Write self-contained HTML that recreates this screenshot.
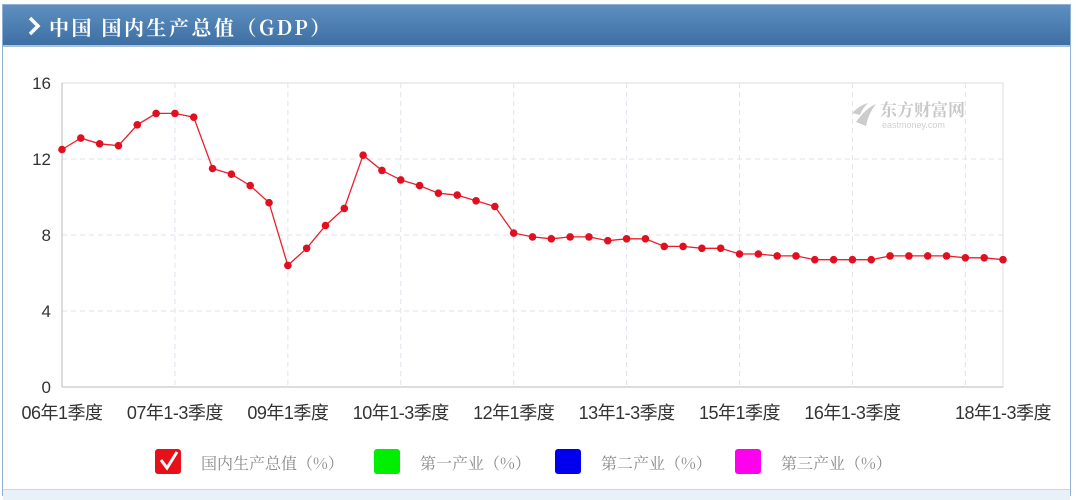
<!DOCTYPE html>
<html><head><meta charset="utf-8"><style>
body{margin:0;width:1080px;height:495px;background:#fff;overflow:hidden;font-family:"Liberation Sans","Noto Sans CJK SC",sans-serif}
.frame{position:absolute;left:2px;top:4px;width:1067px;height:490px;border:1px solid #8fb0d0;background:#fff}
.hdr{position:absolute;left:0;top:0;width:1067px;height:40px;background:linear-gradient(#5e8fc0,#3e6fa3);border-bottom:2px solid #a9c3de}
.hdr span{position:absolute;left:46px;top:7px;color:#fff;font-size:20px;font-weight:bold;font-family:"Noto Serif CJK SC","Noto Sans CJK SC",serif;letter-spacing:2.5px}
.bot{position:absolute;left:0;top:484px;width:1067px;height:10px;background:#e8f0f8;border-top:1px solid #c8d8e8}
</style></head><body>
<div class="frame"><div class="hdr"><svg style="position:absolute;left:24px;top:11px" width="14" height="20"><path d="M3 2 L11 10 L3 18" stroke="#fff" stroke-width="3.5" fill="none"/></svg><span>中国 国内生产总值（GDP）</span></div><div class="bot"></div></div>
<svg id="c" width="1080" height="495" style="position:absolute;left:0;top:0" font-family="Liberation Sans,Noto Sans CJK SC,sans-serif"></svg>
<script>
var v=[12.5,13.1,12.8,12.7,13.8,14.4,14.4,14.2,11.5,11.2,10.6,9.7,6.4,7.3,8.5,9.4,12.2,11.4,10.9,10.6,10.2,10.1,9.8,9.5,8.1,7.9,7.8,7.9,7.9,7.7,7.8,7.8,7.4,7.4,7.3,7.3,7.0,7.0,6.9,6.9,6.7,6.7,6.7,6.7,6.9,6.9,6.9,6.9,6.8,6.8,6.7];
var x0=62,dx=18.82,y0=387,sy=19,s='';
s+='<rect x="62" y="83" width="941" height="304" fill="none" stroke="#ddd"/>';
for(var k=1;k<=3;k++){var y=y0-4*k*sy;s+='<line x1="62" x2="1003" y1="'+y+'" y2="'+y+'" stroke="#e2e2ee" stroke-dasharray="5,4"/>';}
for(var k=1;k<=8;k++){var x=x0+k*6*dx;s+='<line x1="'+x+'" x2="'+x+'" y1="83" y2="387" stroke="#e2e2ee" stroke-dasharray="5,4"/>';}
s+='<line x1="62" x2="62" y1="83" y2="387" stroke="#bbb"/><line x1="62" x2="1003" y1="387" y2="387" stroke="#bbb"/>';
['0','4','8','12','16'].forEach(function(t,i){s+='<text x="51" y="'+(y0-i*4*sy+6)+'" font-size="17" fill="#333" text-anchor="end">'+t+'</text>';});
var L=['06年1季度','07年1-3季度','09年1季度','10年1-3季度','12年1季度','13年1-3季度','15年1季度','16年1-3季度'];
L.forEach(function(t,i){s+='<text x="'+(x0+i*6*dx)+'" y="419" font-size="18" fill="#333" text-anchor="middle" letter-spacing="-0.5">'+t+'</text>';});
s+='<text x="1003" y="419" font-size="18" fill="#333" text-anchor="middle" letter-spacing="-0.5">18年1-3季度</text>';
var p=v.map(function(a,i){return (x0+i*dx).toFixed(1)+','+(y0-a*sy).toFixed(1)}).join(' ');
s+='<polyline points="'+p+'" fill="none" stroke="#e8202a" stroke-width="1.3"/>';
v.forEach(function(a,i){s+='<circle cx="'+(x0+i*dx)+'" cy="'+(y0-a*sy)+'" r="3.8" fill="#e01020"/>';});
s+='<g fill="#ccc"><path d="M852 113 q8-8 16-10 q-6 6-8 12z M856 122 q10-14 20-18 q-8 10-10 22z"/></g><text x="880" y="116" font-size="17" fill="#c8c8c8" font-weight="bold" font-family="Noto Serif CJK SC,serif">东方财富网</text><text x="882" y="128" font-size="9" fill="#d0d0d0">eastmoney.com</text>';
var lg=[['#e81018','国内生产总值（%）',155],['#00ee00','第一产业（%）',374],['#0000ee','第二产业（%）',555],['#ff00ee','第三产业（%）',735]];
lg.forEach(function(g){s+='<rect x="'+g[2]+'" y="449" width="26" height="25" rx="3" fill="'+g[0]+'"/><text x="'+(g[2]+46)+'" y="469" font-size="16" fill="#888" font-family="Noto Serif CJK SC,serif">'+g[1]+'</text>';});
s+='<path d="M161 460 l6 8 l10-16" stroke="#fff" stroke-width="3" fill="none"/>';
document.getElementById('c').innerHTML=s;
</script>
</body></html>
